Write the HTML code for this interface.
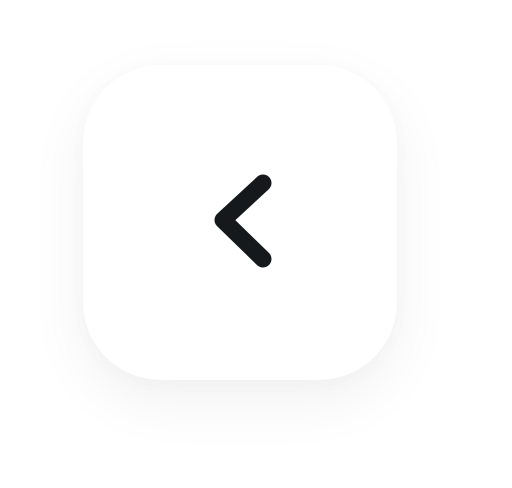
<!DOCTYPE html>
<html><head><style>
html,body{margin:0;padding:0;background:#fff;width:512px;height:488px;overflow:hidden}
.b{position:absolute;left:83px;top:65px;width:314px;height:315px;border-radius:78px;background:#fff;box-shadow:0 20px 60px rgba(0,0,0,0.06),0 4px 20px rgba(0,0,0,0.02)}
svg{position:absolute;left:0;top:0}
</style></head><body>
<div class="b"></div>
<svg width="512" height="488"><path d="M263 183 L223 220 L263 259" fill="none" stroke="#15191c" stroke-width="17" stroke-linecap="round" stroke-linejoin="round"/></svg>
</body></html>
